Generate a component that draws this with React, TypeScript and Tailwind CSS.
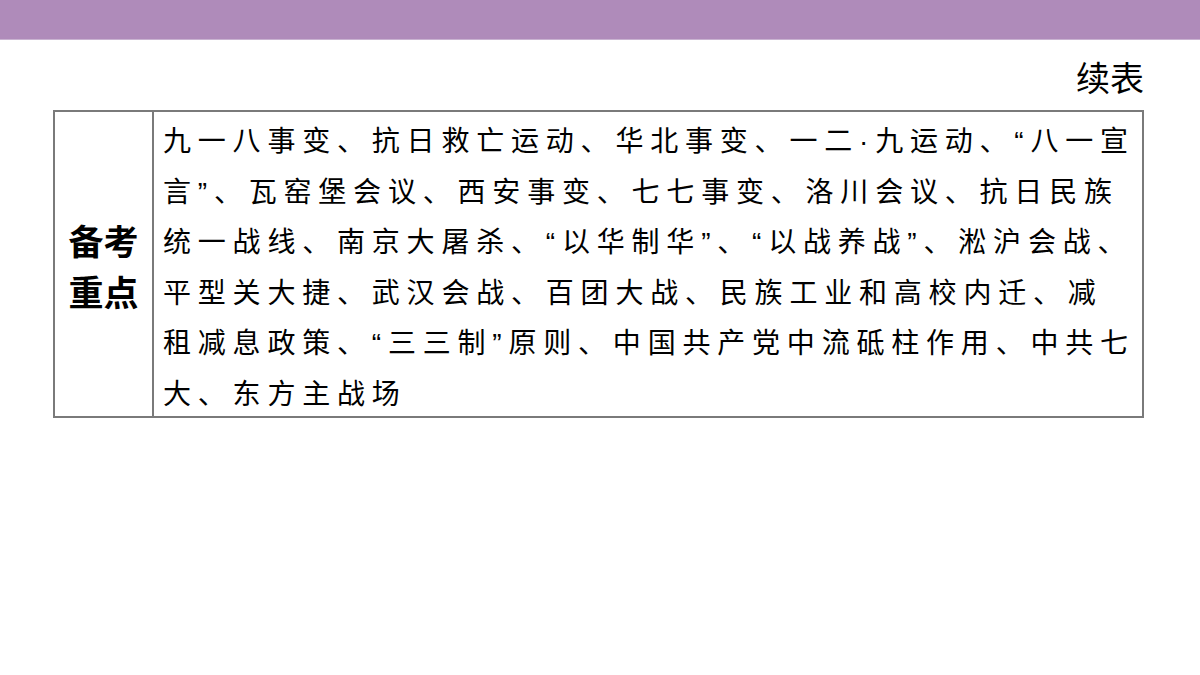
const lines = [
  '九一八事变、抗日救亡运动、华北事变、一二·九运动、“八一宣',
  '言”、瓦窑堡会议、西安事变、七七事变、洛川会议、抗日民族',
  '统一战线、南京大屠杀、“以华制华”、“以战养战”、淞沪会战、',
  '平型关大捷、武汉会战、百团大战、民族工业和高校内迁、减',
  '租减息政策、“三三制”原则、中国共产党中流砥柱作用、中共七',
  '大、东方主战场',
]

function App() {
  return (
    <div className="w-[1200px] h-[675px] bg-white overflow-hidden font-['Liberation_Sans','Noto_Sans_CJK_SC',sans-serif]">
      {/* Top band */}
      <div className="h-[40px] bg-[#af8bba] border-b border-[#c9b3d1]" />

      <div className="pl-[53px] pr-[56px]">
        <div className="flex justify-end pt-[18px] h-[70px]">
          <span className="text-[34px] leading-[42px] text-black">续表</span>
        </div>

        {/* Table */}
        <div className="flex border-2 border-[#7a7a7a] h-[308px]">
          <div className="w-[99px] shrink-0 border-r-2 border-[#7a7a7a] flex flex-col items-center justify-center pt-[8px]">
            <span className="text-[35px] leading-[51px] font-bold text-black">备考</span>
            <span className="text-[35px] leading-[51px] font-bold text-black">重点</span>
          </div>
          <div className="flex-1 pl-[9px] pt-[5px]">
            {lines.map((line, i) => (
              <div
                key={i}
                className="text-[28px] leading-[50.6px] tracking-[6.8px] text-black whitespace-nowrap"
              >
                {line}
              </div>
            ))}
          </div>
        </div>
      </div>
    </div>
  )
}

export default App
